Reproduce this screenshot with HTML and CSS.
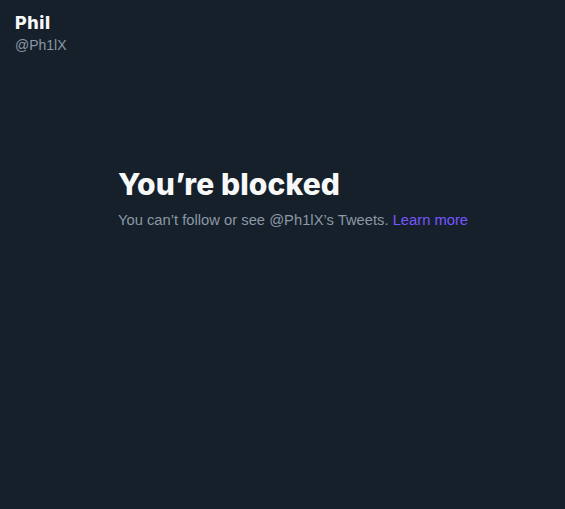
FILE: index.html
```html
<!DOCTYPE html>
<html>
<head>
<meta charset="utf-8">
<link rel="stylesheet" href="styles.css">
</head>
<body>
<header class="profile-head">
  <div class="name">Phil</div>
  <div class="handle">@Ph1lX</div>
</header>
<main class="blocked">
  <h1 class="title">You’re blocked</h1>
  <p class="desc">You can’t follow or see @Ph1lX’s Tweets. <a class="link" href="#">Learn more</a></p>
</main>
</body>
</html>
```
FILE: styles.css
```css
html, body {
  margin: 0;
  padding: 0;
  background: #15202b;
  height: 100%;
}
body {
  font-family: "Liberation Sans", Arial, sans-serif;
  color: #f7f9f9;
}
.profile-head {
  padding: 11px 15px 0;
}
.name {
  font-family: Inter, "Liberation Sans", sans-serif;
  font-size: 18px;
  font-weight: 800;
  line-height: 24px;
  letter-spacing: 0.6px;
}
.handle {
  font-size: 14px;
  line-height: 20px;
  color: #8b98a5;
}
.blocked {
  padding: 111px 0 0 118px;
}
.title {
  margin: 0;
  font-family: Inter, "Liberation Sans", sans-serif;
  font-size: 30px;
  font-weight: 800;
  line-height: 36px;
  letter-spacing: 0.1px;
}
.desc {
  margin: 8px 0 0;
  font-size: 14.75px;
  line-height: 20px;
  color: #8b98a5;
  white-space: nowrap;
}
.link {
  color: #7856ff;
  text-decoration: none;
}
```
